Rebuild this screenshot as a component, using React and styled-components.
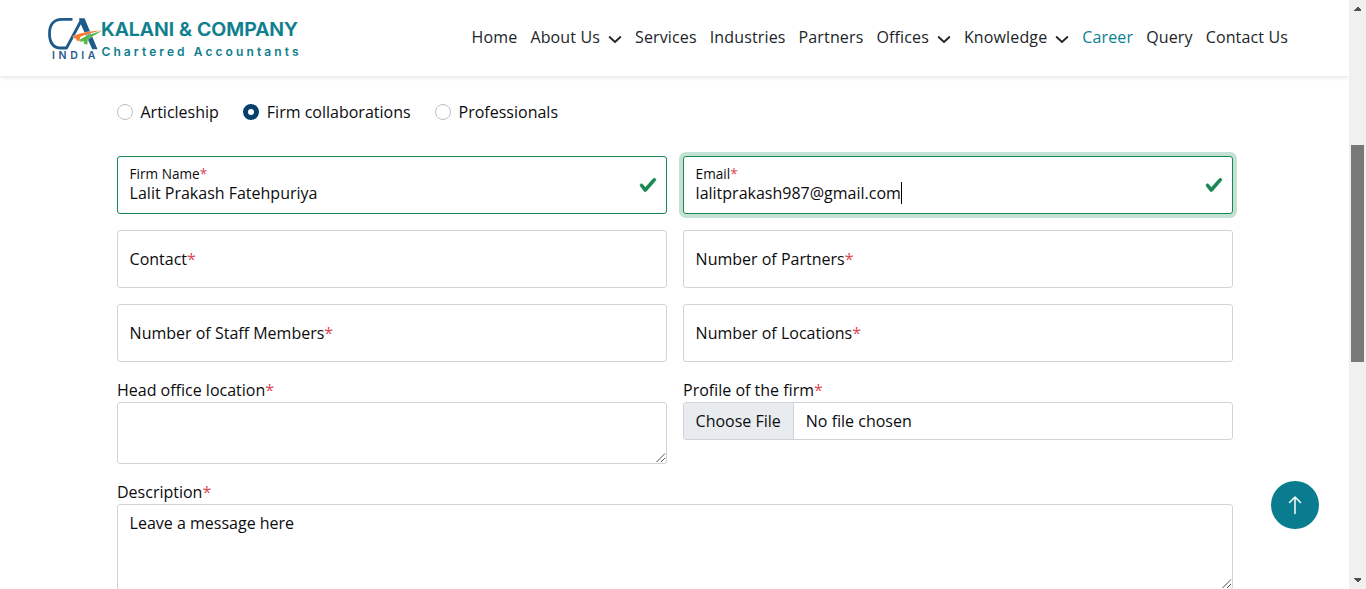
import React from "react";
import styled, { createGlobalStyle, css } from "styled-components";

const Global = createGlobalStyle`
  * { box-sizing: border-box; }
  html, body { margin: 0; height: 100%; overflow: hidden; background: #fff; }
  body { font: 400 16px/24px "Open Sans", sans-serif; color: #0c0c0f; }
`;

const Window = styled.div`
  display: flex;
  height: 589px;
  overflow: hidden;
`;

const Page = styled.div`
  flex: 1;
  min-width: 0;
  display: flex;
  flex-direction: column;
`;

const Header = styled.header`
  flex: none;
  height: 76px;
  padding: 0 61px 0 44px;
  display: flex;
  justify-content: space-between;
  align-items: flex-start;
  box-shadow: 0 1px 5px rgba(0, 0, 0, 0.13);
`;

const Logo = styled.svg`
  display: block;
  width: 260px;
  height: 52px;
  margin-top: 12px;
`;

const Nav = styled.nav`
  display: flex;
  margin-top: 25px;
  gap: 13px;
`;

const NavLink = styled.a`
  display: flex;
  align-items: center;
  white-space: nowrap;
  letter-spacing: 0.14px;
  color: ${(p) => (p.$active ? "#0b7f91" : "#212529")};
  svg { margin: 5px 0 0 8px; }
`;

const Form = styled.form`
  width: 1116px;
  margin: 24px 0 0 117px;
`;

const RadioRow = styled.div`
  display: flex;
  gap: 24.5px;
`;

const RadioLabel = styled.label`
  display: flex;
  align-items: center;
  gap: 7.5px;
`;

const Radio = styled.span`
  width: 16px;
  height: 16px;
  border-radius: 50%;
  background: #fff;
  border: ${(p) => (p.$checked ? "5px solid #05416a" : "1px solid #bfbfbf")};
`;

const Grid = styled.div`
  display: grid;
  grid-template-columns: 550px 550px;
  gap: 16px;
  margin-top: 32px;
`;

const box = css`
  border: 1px solid #ced4da;
  border-radius: 3px;
  background: #fff;
`;

const Field = styled.div`
  ${box}
  height: 58px;
  padding: 0 9px 0 11.6px;
  display: flex;
  align-items: center;
  justify-content: space-between;
  ${(p) => p.$valid && css`border-color: #198754;`}
  ${(p) => p.$focus && css`box-shadow: 0 0 0 4px rgba(25, 135, 84, 0.25);`}
`;

const FieldText = styled.div`
  display: flex;
  flex-direction: column;
  padding-bottom: 3px;
`;

const FloatLabel = styled.span`
  font-size: 13.6px;
  line-height: 18px;
`;

const Value = styled.span`
  display: flex;
  align-items: center;
  line-height: 20px;
`;

const Caret = styled.span`
  width: 1px;
  height: 22px;
  margin: -1px 0;
  background: #000;
`;

const Star = styled.span`
  color: #dd4653;
`;

const Label = styled.div`
  line-height: 24px;
`;

const Area = styled.div`
  ${box}
  height: ${(p) => p.$height}px;
  padding: 6px 11.6px;
  display: flex;
  justify-content: space-between;
  svg { align-self: flex-end; margin: 0 -11.600px -6px 0; }
`;

const FilePicker = styled.div`
  ${box}
  height: 38px;
  display: flex;
  overflow: hidden;
`;

const FileButton = styled.span`
  padding: 6px 12.4px 6px 11.6px;
  background: #e9ecef;
  border-right: 1px solid #ced4da;
`;

const FileName = styled.span`
  padding: 6px 11.6px;
`;

const Description = styled.div`
  margin-top: 16px;
`;

const TopButton = styled.button`
  position: fixed;
  left: 1271px;
  top: 481px;
  width: 48px;
  height: 48px;
  padding: 0;
  border: 0;
  border-radius: 50%;
  background: #097c8f;
  display: flex;
  align-items: center;
  justify-content: center;
`;

const ScrollTrack = styled.div`
  flex: none;
  width: 17px;
  background: #f0f0f0;
  display: flex;
  flex-direction: column;
  align-items: center;
  justify-content: space-between;
  padding: 7px 0;
`;

const ScrollThumb = styled.div`
  width: 13px;
  height: 217px;
  background: #787878;
  margin: 134px 0 auto;
`;

const Chevron = () => (
  <svg width="14" height="9" viewBox="0 0 14 9" fill="none" stroke="#212529" strokeWidth="1.8" strokeLinecap="round" strokeLinejoin="round">
    <path d="M1.6 2 L7 7 L12.4 2" />
  </svg>
);

const Check = () => (
  <svg width="18" height="18" viewBox="0 0 8 8" fill="#198754">
    <path stroke="#198754" strokeWidth=".25" d="M2.3 6.73.6 4.53c-.4-1.04.46-1.4 1.1-.8l1.1 1.4 3.4-3.8c.6-.63 1.6-.27 1.2.7l-4 4.6c-.43.5-.8.4-1.1.1z" />
  </svg>
);

const Grip = () => (
  <svg width="11" height="11" viewBox="0 0 11 11" stroke="#555" strokeWidth="1">
    <path d="M1.5 10 L10 1.500 M6 10 L10 6" />
  </svg>
);

const Arrow = ({ down }) => (
  <svg width="7" height="4" viewBox="0 0 7 4" fill="#505050" shapeRendering="crispEdges">
    <path d={down ? "M0 0H7V1L4 4H3L0 1Z" : "M0 4H7V3L4 0H3L0 3Z"} />
  </svg>
);

const Brand = () => (
  <Logo viewBox="44 12 260 52">
    <g fill="none" stroke="#1c5a8c">
      <path d="M72.500 19.300 H62 C53.5 19.300 49.500 25 49.500 33.500 C49.500 43 53.5 48 61 48 H66.500 L81.500 20" strokeWidth="2.800" strokeLinejoin="round" />
    </g>
    <path d="M79 18.200 H84.500 L97.500 49.300 H92.300 L80 22.500Z" fill="#1c5a8c" />
    <g stroke="#fff" strokeWidth=".7" paintOrder="stroke">
      <path d="M73 36.300 C80 33 90 31.200 101.500 30.600 C92 32.500 86 34.500 80 37.200 L79.800 41.500 L76.300 40.300 V38.200 L74 38.500Z" fill="#f47b30" />
      <path d="M80 39.600 C86 35.500 94 33 102 30.800 C97 34 91.500 36.500 87.800 39.300 L87.300 44.700 L83.700 43.500 L84 41 L80.500 42Z" fill="#58b947" />
    </g>
    <g fontFamily="Inter, sans-serif">
      <text x="52" y="59" fontSize="10.5" fontWeight="600" fill="#24588a" textLength="43.500">INDIA</text>
      <text x="101" y="36" fontSize="19.200" fontWeight="600" fill="#0d7e8e" stroke="#0d7e8e" strokeWidth=".2" textLength="197" lengthAdjust="spacingAndGlyphs">KALANI &amp; COMPANY</text>
      <text x="101.500" y="55.500" fontSize="12" fontWeight="600" fill="#0d7e8e" textLength="197">Chartered Accountants</text>
    </g>
  </Logo>
);

const NAV = [
  ["Home"], ["About Us", true], ["Services"], ["Industries"], ["Partners"],
  ["Offices", true], ["Knowledge", true], ["Career"], ["Query"], ["Contact Us"],
];

const EMPTY = ["Contact", "Number of Partners", "Number of Staff Members", "Number of Locations"];

const Required = ({ children }) => <span>{children}<Star>*</Star></span>;

export default function App() {
  return (
    <Window>
      <Global />
      <Page>
        <Header>
          <Brand />
          <Nav>
            {NAV.map(([name, menu]) => (
              <NavLink key={name} $active={name === "Career"}>{name}{menu && <Chevron />}</NavLink>
            ))}
          </Nav>
        </Header>
        <Form>
          <RadioRow>
            {["Articleship", "Firm collaborations", "Professionals"].map((name, i) => (
              <RadioLabel key={name}><Radio $checked={i === 1} />{name}</RadioLabel>
            ))}
          </RadioRow>
          <Grid>
            <Field $valid>
              <FieldText>
                <FloatLabel><Required>Firm Name</Required></FloatLabel>
                <Value>Lalit Prakash Fatehpuriya</Value>
              </FieldText>
              <Check />
            </Field>
            <Field $valid $focus>
              <FieldText>
                <FloatLabel><Required>Email</Required></FloatLabel>
                <Value>lalitprakash987@gmail.com<Caret /></Value>
              </FieldText>
              <Check />
            </Field>
            {EMPTY.map((name) => (
              <Field key={name}><Required>{name}</Required></Field>
            ))}
            <div>
              <Label><Required>Head office location</Required></Label>
              <Area $height={62}><span /><Grip /></Area>
            </div>
            <div>
              <Label><Required>Profile of the firm</Required></Label>
              <FilePicker>
                <FileButton>Choose File</FileButton>
                <FileName>No file chosen</FileName>
              </FilePicker>
            </div>
          </Grid>
          <Description>
            <Label><Required>Description</Required></Label>
            <Area $height={86}><span>Leave a message here</span><Grip /></Area>
          </Description>
        </Form>
      </Page>
      <ScrollTrack>
        <Arrow />
        <ScrollThumb />
        <Arrow down />
      </ScrollTrack>
      <TopButton aria-label="Back to top">
        <svg width="24" height="24" viewBox="0 0 24 24" fill="none" stroke="#fff" strokeWidth="1.5" strokeLinecap="round" strokeLinejoin="round">
          <path d="M12 20.500V4M6.500 9.500L12 4L17.500 9.500" />
        </svg>
      </TopButton>
    </Window>
  );
}
